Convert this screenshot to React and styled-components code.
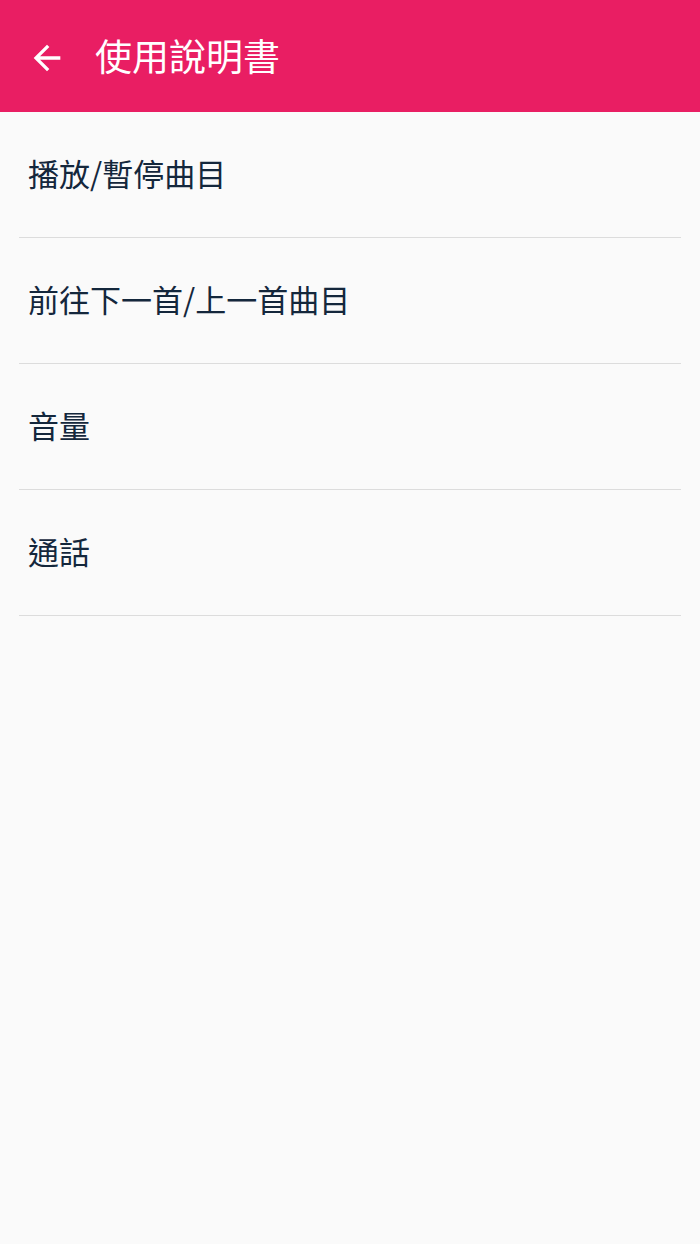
import React from 'react'
import styled, { createGlobalStyle } from 'styled-components'

const Global = createGlobalStyle`
  html, body {
    margin: 0;
    padding: 0;
    background: #fafafa;
  }
  body {
    font-family: "Noto Sans CJK TC", "Noto Sans", sans-serif;
  }
`

const Page = styled.div`
  width: 700px;
  min-height: 1244px;
  background: #fafafa;
`

const Header = styled.header`
  height: 112px;
  background: #e91e63;
  display: flex;
  align-items: center;
  padding-left: 27px;
  box-sizing: border-box;
`

const BackButton = styled.div`
  width: 40px;
  height: 40px;
  display: flex;
  align-items: center;
  justify-content: center;
  margin-top: 3px;
`

const Title = styled.h1`
  margin: 0 0 2px 28px;
  font-size: 37px;
  font-weight: 400;
  color: #fff;
  line-height: 1;
`

const List = styled.ul`
  list-style: none;
  margin: 0;
  padding: 0;
`

const Item = styled.li`
  height: 126px;
  box-sizing: border-box;
  margin: 0 19px;
  border-bottom: 1px solid #dcdcdc;
  display: flex;
  align-items: center;
  padding: 0 0 5px 9px;
  font-size: 31px;
  color: #14273c;
`

const items = ['播放/暫停曲目', '前往下一首/上一首曲目', '音量', '通話']

export default function App() {
  return (
    <Page>
      <Global />
      <Header>
        <BackButton>
          <svg width="40" height="40" viewBox="0 0 24 24">
            <path fill="#fff" d="M20 11H7.83l5.59-5.59L12 4l-8 8 8 8 1.41-1.41L7.83 13H20v-2z" />
          </svg>
        </BackButton>
        <Title>使用說明書</Title>
      </Header>
      <List>
        {items.map((t) => (
          <Item key={t}>{t}</Item>
        ))}
      </List>
    </Page>
  )
}
